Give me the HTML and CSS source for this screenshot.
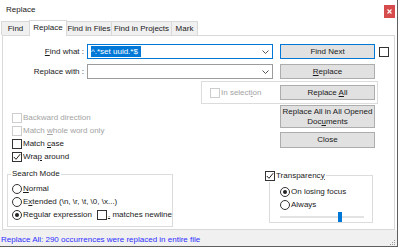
FILE: index.html
```html
<!DOCTYPE html>
<html lang="en">
<head>
    <meta charset="UTF-8">
    <title>Replace</title>
    <link rel="stylesheet" href="styles.css">
</head>
<body>
    <div class="window">
        <!-- Title bar -->
        <div class="titlebar">
            <span class="title">Replace</span>
            <span class="close">
                <svg width="5" height="5" viewBox="0 0 5 5"><path d="M0.5 0.5 L4.5 4.5 M4.5 0.5 L0.5 4.5" stroke="#fff" stroke-width="1.1"/></svg>
            </span>
        </div>

        <!-- Tabs -->
        <div class="tabs">
            <div class="tab tab-find">Find</div>
            <div class="tab tab-replace active">Replace</div>
            <div class="tab tab-files">Find in Files</div>
            <div class="tab tab-projects">Find in Projects</div>
            <div class="tab tab-mark">Mark</div>
        </div>

        <!-- Replace panel -->
        <div class="panel">
            <div class="row row-find">
                <label class="field-label"><u>F</u>ind what :</label>
                <div class="combo focused">
                    <span class="combo-text"><span class="sel">^.*set uuid.*$</span></span>
                    <svg class="arrow" width="7" height="4" viewBox="0 0 7 4"><polyline points="0.5,0.5 3.5,3.5 6.5,0.5" fill="none" stroke="#555" stroke-width="1"/></svg>
                </div>
                <button class="btn default">Find Next</button>
                <span class="box side-box"></span>
            </div>

            <div class="row row-replace">
                <label class="field-label">Replace with :</label>
                <div class="combo">
                    <span class="combo-text"></span>
                    <svg class="arrow" width="7" height="4" viewBox="0 0 7 4"><polyline points="0.5,0.5 3.5,3.5 6.5,0.5" fill="none" stroke="#555" stroke-width="1"/></svg>
                </div>
                <button class="btn"><u>R</u>eplace</button>
            </div>

            <div class="selection-box">
                <span class="check disabled"><span class="box"></span><span>In select<u>i</u>on</span></span>
                <button class="btn">Replace <u>A</u>ll</button>
            </div>

            <div class="middle">
                <div class="options">
                    <span class="check disabled"><span class="box"></span><span>Backward direction</span></span>
                    <span class="check disabled"><span class="box"></span><span>Match <u>w</u>hole word only</span></span>
                    <span class="check"><span class="box"></span><span>Match <u>c</u>ase</span></span>
                    <span class="check"><span class="box"><svg width="8" height="8" viewBox="0 0 8 8"><polyline points="0.8,4 3,6.3 7.2,1.2" fill="none" stroke="#222" stroke-width="1"/></svg></span><span>Wra<u>p</u> around</span></span>
                </div>
                <div class="actions">
                    <button class="btn tall">Replace All in All Opened<br>Doc<u>u</u>ments</button>
                    <button class="btn close-btn">Close</button>
                </div>
            </div>

            <div class="bottom">
                <fieldset class="group mode">
                    <legend>Search Mode</legend>
                    <span class="check"><span class="radio"></span><span><u>N</u>ormal</span></span>
                    <span class="check"><span class="radio"></span><span>E<u>x</u>tended (\n, \r, \t, \0, \x...)</span></span>
                    <span class="check"><span class="radio on"></span><span>Re<u>g</u>ular expression</span>
                        <span class="check inline"><span class="box"></span><span><u>.</u> matches newline</span></span>
                    </span>
                </fieldset>

                <fieldset class="group transparency">
                    <legend><span class="check"><span class="box"><svg width="8" height="8" viewBox="0 0 8 8"><polyline points="0.8,4 3,6.3 7.2,1.2" fill="none" stroke="#222" stroke-width="1"/></svg></span><span>Transparenc<u>y</u></span></span></legend>
                    <span class="check"><span class="radio on"></span><span>On losing focus</span></span>
                    <span class="check"><span class="radio"></span><span>Always</span></span>
                    <div class="slider">
                        <span class="track"></span>
                        <span class="thumb"></span>
                    </div>
                </fieldset>
            </div>
        </div>

        <!-- Status bar -->
        <div class="statusbar">
            <span class="status-text">Replace All: 290 occurrences were replaced in entire file</span>
            <svg class="grip" width="7" height="7" viewBox="0 0 7 7">
                <rect x="5" y="1" width="1" height="1" fill="#9a9a9a"/>
                <rect x="3" y="3" width="1" height="1" fill="#9a9a9a"/>
                <rect x="5" y="3" width="1" height="1" fill="#9a9a9a"/>
                <rect x="1" y="5" width="1" height="1" fill="#9a9a9a"/>
                <rect x="3" y="5" width="1" height="1" fill="#9a9a9a"/>
                <rect x="5" y="5" width="1" height="1" fill="#9a9a9a"/>
            </svg>
        </div>
    </div>
</body>
</html>
```

FILE: styles.css
```css
* {
    margin: 0;
    padding: 0;
    box-sizing: border-box;
}

body {
    font-family: 'Liberation Sans', Arial, sans-serif;
    font-size: 8px;
    color: #1a1a1a;
    background: #fff;
}

.window {
    width: 398px;
    height: 247px;
    border-right: 1px solid #5f5f5f;
    border-bottom: 1px solid #5f5f5f;
    display: flex;
    flex-direction: column;
    background: #fff;
}

/* Title bar */
.titlebar {
    height: 20px;
    display: flex;
    align-items: flex-start;
}

.title {
    line-height: 20px;
    padding-left: 6px;
}

.close {
    width: 11px;
    height: 13px;
    margin: 5px 2px 0 auto;
    background: #d64b4b;
    display: flex;
    align-items: center;
    justify-content: center;
}

/* Tabs */
.tabs {
    height: 15px;
    display: flex;
    align-items: flex-start;
    padding-left: 1px;
}

.tab {
    height: 14px;
    margin-top: 1px;
    margin-left: -1px;
    line-height: 13px;
    text-align: center;
    border: 1px solid #d9d9d9;
    border-bottom: none;
    background: #f0f0f0;
}

.tab:first-child {
    margin-left: 0;
}

.tab.active {
    height: 16px;
    margin-top: 0;
    line-height: 14px;
    background: #fff;
    position: relative;
    z-index: 1;
}

.tab-find { width: 29px; }
.tab-replace { width: 38px; }
.tab-files { width: 46px; }
.tab-projects { width: 61px; }
.tab-mark { width: 27px; }

/* Panel */
.panel {
    margin-left: 2px;
    width: 393px;
    height: 195px;
    border: 1px solid #d9d9d9;
    background: #fff;
}

.row {
    display: flex;
    align-items: center;
    height: 15px;
}

.row-find {
    margin-top: 8px;
}

.row-replace {
    margin-top: 5px;
}

.field-label {
    width: 81px;
    margin-right: 3px;
    text-align: right;
}

.combo {
    width: 186px;
    height: 15px;
    border: 1px solid #9c9c9c;
    display: flex;
    align-items: center;
    padding-left: 3px;
}

.combo.focused {
    border-color: #0078d7;
}

.sel {
    display: inline-block;
    background: #0078d7;
    color: #fff;
    line-height: 11px;
    padding-right: 3px;
}

.arrow {
    margin-left: auto;
    margin-right: 3px;
}

.btn {
    font-family: inherit;
    font-size: 8px;
    color: #1a1a1a;
    width: 95px;
    height: 15px;
    background: #e1e1e1;
    border: 1px solid #adadad;
    margin-left: 7px;
    line-height: 12px;
}

.btn.default {
    border-color: #0078d7;
}

.side-box {
    margin-left: 4px;
}

/* Checkboxes and radios */
.check {
    display: flex;
    align-items: center;
    height: 13px;
    white-space: nowrap;
}

.check.disabled {
    color: #a3a3a3;
}

.box {
    width: 10px;
    height: 10px;
    border: 1px solid #333;
    background: #fff;
    margin-right: 1px;
    display: flex;
    align-items: center;
    justify-content: center;
}

.disabled .box {
    border-color: #cdcdcd;
}

.radio {
    width: 10px;
    height: 10px;
    border: 1px solid #333;
    border-radius: 50%;
    margin-right: 1px;
    display: flex;
    align-items: center;
    justify-content: center;
}

.radio.on::after {
    content: '';
    width: 4px;
    height: 4px;
    border-radius: 50%;
    background: #222;
}

.selection-box {
    margin: 2px 0 0 198px;
    width: 177px;
    height: 23px;
    border: 1px solid #dcdcdc;
    display: flex;
    align-items: center;
    padding-left: 8px;
}

.selection-box .btn {
    margin-left: auto;
    margin-right: 2px;
}

/* Options and side buttons */
.middle {
    display: flex;
    height: 59px;
}

.options {
    padding: 7px 0 0 9px;
}

.actions {
    margin-left: auto;
    margin-right: 19px;
    padding-top: 1px;
    display: flex;
    flex-direction: column;
}

.actions .btn {
    margin-left: 0;
}

.btn.tall {
    height: 23px;
    line-height: 10px;
    padding: 0;
}

.btn.close-btn {
    height: 16px;
    margin-top: 4px;
}

/* Group boxes */
.bottom {
    display: flex;
    margin-top: 6px;
}

.group {
    border: 1px solid #dcdcdc;
    padding: 0 0 0 4px;
}

.group legend {
    line-height: 10px;
    padding: 0 1px;
    margin-left: -1px;
}

.mode {
    margin-left: 4px;
    width: 166px;
    height: 58px;
    padding-top: 3px;
}

.check.inline {
    margin-left: 5px;
}

.transparency {
    margin-left: 96px;
    width: 104px;
    height: 54px;
    padding: 3px 0 0 10px;
}

.transparency legend {
    margin-left: -15px;
    padding: 0 1px 0 0;
}

.slider {
    position: relative;
    width: 84px;
    height: 13px;
}

.track {
    position: absolute;
    left: 0;
    top: 5px;
    width: 84px;
    height: 2px;
    background: #e3e3e3;
}

.thumb {
    position: absolute;
    left: 58px;
    top: 1px;
    width: 4px;
    height: 10px;
    background: #0078d7;
}

/* Status bar */
.statusbar {
    height: 16px;
    background: #f0f0f0;
    display: flex;
}

.status-text {
    color: #2f2fff;
    line-height: 12px;
    padding: 4px 0 0 1px;
}

.grip {
    margin: auto 1px 0 auto;
}
```
